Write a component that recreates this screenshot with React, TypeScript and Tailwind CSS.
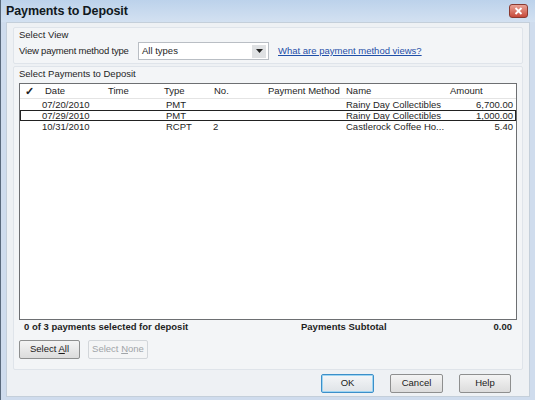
import React from "react";

const font = { fontFamily: '"Liberation Sans", Arial, sans-serif' };

function Btn({ children, disabled, primary }: { children: React.ReactNode; disabled?: boolean; primary?: boolean }) {
  return (
    <div
      className={`flex items-center justify-center h-[19px] rounded-[2px] border text-[9.5px] ${
        disabled
          ? "border-[#d2d6da] bg-[#f4f5f6] text-[#a0a4a8]"
          : primary
          ? "border-[#3c8fc9] bg-gradient-to-b from-[#f4f6f8] to-[#dfe3e7] text-[#1a1a1a] shadow-[inset_0_0_0_1px_#9ed5f2]"
          : "border-[#8e8f8f] bg-gradient-to-b from-[#f4f4f4] to-[#dcdcdc] text-[#1a1a1a]"
      }`}
    >
      <span>{children}</span>
    </div>
  );
}

const rows = [
  { date: "07/20/2010", type: "PMT", no: "", name: "Rainy Day Collectibles", amt: "6,700.00", focus: false },
  { date: "07/29/2010", type: "PMT", no: "", name: "Rainy Day Collectibles", amt: "1,000.00", focus: true },
  { date: "10/31/2010", type: "RCPT", no: "2", name: "Castlerock Coffee Ho...", amt: "5.40", focus: false },
];

export default function App() {
  return (
    <div
      style={font}
      className="w-[535px] h-[400px] flex flex-col bg-[#cfdced] border-l border-[#5a6a7c] text-[#1e1e1e] overflow-hidden"
    >
      {/* Title bar */}
      <div className="h-[22px] flex items-center justify-between pl-[5px] pr-[7px] bg-gradient-to-b from-[#bcd2eb] to-[#d3e1f1]">
        <div className="text-[12.5px] font-bold text-[#101820] tracking-[-0.1px]">Payments to Deposit</div>
        <div className="w-[19px] h-[14px] rounded-[3px] border border-[#8a3a30] bg-gradient-to-b from-[#e8a296] to-[#c6483a] flex items-center justify-center">
          <svg width="9" height="8" viewBox="0 0 9 8">
            <path d="M1.5 1 L7.5 7 M7.5 1 L1.5 7" stroke="#fff" strokeWidth="1.8" />
          </svg>
        </div>
      </div>

      {/* Body */}
      <div className="flex-1 mx-[5px] mb-[3px] bg-[#eef1f4] border border-[#c4cfda] flex flex-col px-[6px] pt-[4px]">
        {/* Select View */}
        <div className="h-[37px] border border-[#dfe4ea] bg-[#f3f5f7] rounded-[2px] px-[5px] pt-[1px] flex flex-col text-[9.5px]">
          <div className="leading-[12px]">Select View</div>
          <div className="flex items-center h-[20px]">
            <div className="w-[119px] tracking-[-0.2px]">View payment method type</div>
            <div className="w-[131px] h-[18px] bg-white border border-[#b9bec4] flex items-center justify-between pl-[3px] pr-[2px]">
              <span>All types</span>
              <div className="w-[14px] h-[13px] bg-[#dfe1e3] flex items-center justify-center">
                <svg width="7" height="4" viewBox="0 0 7 4">
                  <path d="M0 0 L7 0 L3.5 4 Z" fill="#222" />
                </svg>
              </div>
            </div>
            <div className="ml-[9px] text-[#1f4fa8] underline">What are payment method views?</div>
          </div>
        </div>

        {/* Select Payments */}
        <div className="mt-[2px] flex-1 border border-[#dfe4ea] bg-[#f3f5f7] rounded-[2px] px-[5px] pt-[0px] flex flex-col text-[9.5px] mb-[4px]">
          <div className="leading-[14px]">Select Payments to Deposit</div>
          <div className="h-[237px] bg-white border border-[#6d6f72] mt-[2px] flex flex-col">
            {/* header */}
            <div className="h-[15px] flex items-center border-b border-[#e4e4e4] bg-white">
              <div className="w-[22px] pl-[5px] text-[11px] leading-none font-bold">✓</div>
              <div className="w-[66px] pl-[3px]">Date</div>
              <div className="w-[56px]">Time</div>
              <div className="w-[50px]">Type</div>
              <div className="w-[54px]">No.</div>
              <div className="w-[78px]">Payment Method</div>
              <div className="w-[104px]">Name</div>
              <div className="flex-1">Amount</div>
            </div>
            {rows.map((r, i) => (
              <div
                key={i}
                className={`h-[11px] flex items-center leading-[11px] ${r.focus ? "outline outline-1 outline-[#222] -outline-offset-1" : ""}`}
              >
                <div className="w-[22px]" />
                <div className="w-[68px]">{r.date}</div>
                <div className="w-[56px]" />
                <div className="w-[47px]">{r.type}</div>
                <div className="w-[56px]">{r.no}</div>
                <div className="w-[77px]" />
                <div className="w-[104px]">{r.name}</div>
                <div className="flex-1 text-right pr-[3px]">{r.amt}</div>
              </div>
            ))}
          </div>
          <div className="h-[15px] flex items-center font-bold text-[9.5px] px-[5px]">
            <div className="w-[277px]">0 of 3 payments selected for deposit</div>
            <div className="flex-1">Payments Subtotal</div>
            <div>0.00</div>
          </div>
          <div className="flex gap-[8px] mt-[5px]">
            <div className="w-[61px]">
              <Btn>
                Select <span className="underline">A</span>ll
              </Btn>
            </div>
            <div className="w-[60px]">
              <Btn disabled>
                Select <span className="underline">N</span>one
              </Btn>
            </div>
          </div>
        </div>

        {/* Bottom buttons */}
        <div className="flex justify-end gap-[16px] pr-[12px] pb-[3px]">
          <div className="w-[53px]"><Btn primary>OK</Btn></div>
          <div className="w-[53px]"><Btn>Cancel</Btn></div>
          <div className="w-[52px]"><Btn>Help</Btn></div>
        </div>
      </div>
    </div>
  );
}
